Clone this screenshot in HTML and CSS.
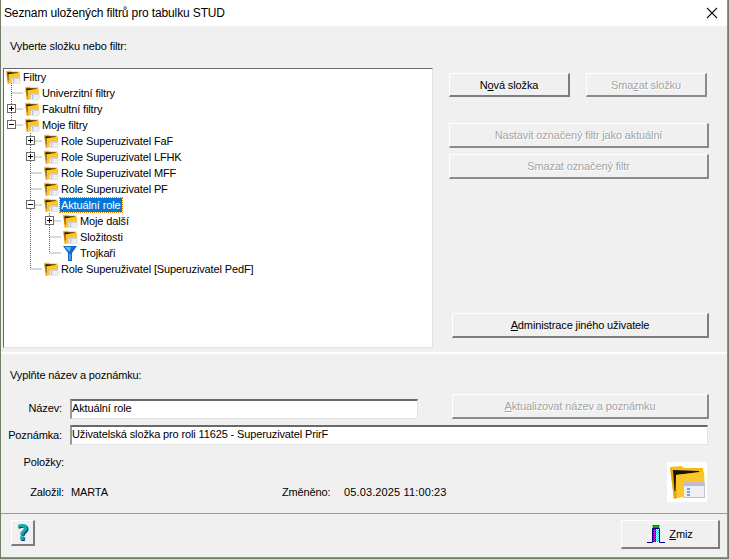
FILE: index.html
```html
<!DOCTYPE html>
<html lang="cs">
<head>
<meta charset="utf-8">
<title>Seznam uložených filtrů</title>
<link rel="stylesheet" href="styles.css">
</head>
<body>
<svg class="defs" width="0" height="0" aria-hidden="true">
  <defs>
    <symbol id="folder" viewBox="0 0 40 40">
      <path d="M3 5 L14 4 L17 6 L36 6 L38 30 L10 36 L7 37 Z" fill="#f6bb1c"/>
      <path d="M3 5 L7 37 L10 36 L6 8 Z" fill="#e8a412"/>
      <path d="M6 8 L32 9 L32 10 L9 13 L8.5 29 L7.5 29 Z" fill="#17130a"/>
      <path d="M9 13 L37 10 L38 30 L10 36 Z" fill="#fcc62a"/>
      <rect x="16.5" y="20.5" width="21" height="15" fill="#eeeef6" stroke="#c2c2d2"/>
      <rect x="17" y="21" width="20" height="3" fill="#bcbcd0"/>
      <rect x="20" y="26" width="3" height="2" fill="#7aa0d8"/>
      <rect x="20" y="29" width="3" height="2" fill="#7aa0d8"/>
      <rect x="20" y="32" width="3" height="2" fill="#7aa0d8"/>
    </symbol>
    <pattern id="dither-m" width="2" height="2" patternUnits="userSpaceOnUse">
      <rect width="2" height="2" fill="#e000d0"/><rect width="1" height="1" fill="#20006a"/>
    </pattern>
    <pattern id="dither-c" width="2" height="2" patternUnits="userSpaceOnUse">
      <rect width="2" height="2" fill="#fff"/><rect width="1" height="1" fill="#20d0e8"/><rect x="1" y="1" width="1" height="1" fill="#20d0e8"/>
    </pattern>
  </defs>
</svg>
<div class="window">
  <header class="titlebar">
    <span class="title">Seznam uložených filtrů pro tabulku STUD</span>
    <svg class="close" width="12" height="12" viewBox="0 0 12 12"><path d="M1 1 L11 11 M11 1 L1 11" stroke="#111" stroke-width="1.1" fill="none"/></svg>
  </header>

  <main class="upper">
    <p class="caption pick">Vyberte složku nebo filtr:</p>
    <div class="upper-body">
      <div class="tree">
        <svg class="guides" width="428" height="278" viewBox="0 0 428 278" aria-hidden="true">
          <path d="M8.5 14V56 M8.5 24H20 M8.5 40H20 M8.5 56H20
                   M27.5 64V200 M27.5 72H39 M27.5 88H39 M27.5 104H39 M27.5 120H39 M27.5 136H39 M27.5 200H39
                   M46.5 144V184 M46.5 152H58 M46.5 168H58 M46.5 184H58" stroke="#666" stroke-width="1" stroke-dasharray="1 1" fill="none"/>
        </svg>
        <div class="row l0"><svg class="ico"><use href="#folder"/></svg><span class="lbl">Filtry</span></div>
        <div class="row l1"><i class="exp"></i><svg class="ico"><use href="#folder"/></svg><span class="lbl">Univerzitní filtry</span></div>
        <div class="row l1"><i class="exp plus"></i><svg class="ico"><use href="#folder"/></svg><span class="lbl">Fakultní filtry</span></div>
        <div class="row l1"><i class="exp minus"></i><svg class="ico"><use href="#folder"/></svg><span class="lbl">Moje filtry</span></div>
        <div class="row l2"><i class="exp plus"></i><svg class="ico"><use href="#folder"/></svg><span class="lbl">Role Superuzivatel FaF</span></div>
        <div class="row l2"><i class="exp plus"></i><svg class="ico"><use href="#folder"/></svg><span class="lbl">Role Superuzivatel LFHK</span></div>
        <div class="row l2"><i class="exp"></i><svg class="ico"><use href="#folder"/></svg><span class="lbl">Role Superuzivatel MFF</span></div>
        <div class="row l2"><i class="exp"></i><svg class="ico"><use href="#folder"/></svg><span class="lbl">Role Superuzivatel PF</span></div>
        <div class="row l2"><i class="exp minus"></i><svg class="ico"><use href="#folder"/></svg><span class="lbl sel">Aktuální role</span></div>
        <div class="row l3"><i class="exp plus"></i><svg class="ico"><use href="#folder"/></svg><span class="lbl">Moje další</span></div>
        <div class="row l3"><i class="exp"></i><svg class="ico"><use href="#folder"/></svg><span class="lbl">Složitosti</span></div>
        <div class="row l3"><i class="exp"></i>
          <svg class="ico" viewBox="0 0 16 16"><path d="M1 1H15L10 8V16H6V8Z" fill="#1668c8"/><path d="M3 2H9L7.5 7Z" fill="#5cc0f0"/><rect x="7" y="9" width="2" height="6" fill="#3fa0e8"/></svg>
          <span class="lbl">Trojkaři</span></div>
        <div class="row l2"><i class="exp"></i><svg class="ico"><use href="#folder"/></svg><span class="lbl">Role Superuživatel [Superuzivatel PedF]</span></div>
      </div>
      <div class="actions">
        <div class="pair">
          <button class="btn wide-a"><span>N<u>o</u>vá složka</span></button>
          <button class="btn wide-b off"><span>Sma<u>z</u>at složku</span></button>
        </div>
        <button class="btn full off set">Nastavit označený filtr jako aktuální</button>
        <button class="btn full off del">Smazat označený filtr</button>
        <button class="btn admin"><span><u>A</u>dministrace jiného uživatele</span></button>
      </div>
    </div>
  </main>

  <section class="lower">
    <p class="caption fill">Vyplňte název a poznámku:</p>
    <div class="line name-line">
      <span class="key name-key">Název:</span>
      <div class="input short">Aktuální role</div>
      <button class="btn update off"><span><u>A</u>ktualizovat název a poznámku</span></button>
    </div>
    <div class="line note-line">
      <span class="key">Poznámka:</span>
      <div class="input long">Uživatelská složka pro roli 11625 - Superuzivatel PrirF</div>
    </div>
    <div class="line items-line"><span class="key far">Položky:</span></div>
    <div class="line meta-line">
      <span class="key far">Založil:</span>
      <span class="author">MARTA</span>
      <span class="changed">Změněno:</span>
      <span class="stamp">05.03.2025 11:00:23</span>
      <div class="bigicon"><svg width="40" height="40"><use href="#folder"/></svg></div>
    </div>
  </section>

  <footer class="footer">
    <button class="btn help"><span class="q">?</span></button>
    <button class="btn exit">
      <svg width="18" height="18" viewBox="0 0 18 18" aria-hidden="true">
        <rect x="5" y="4" width="4" height="13" fill="url(#dither-m)"/>
        <rect x="9" y="4" width="4" height="13" fill="url(#dither-c)"/>
        <path d="M0 17.5H5.5V3.5H12.5V17.5H18" fill="none" stroke="#00008c" stroke-width="1"/>
        <rect x="6" y="0.5" width="6" height="2" fill="#00c000" stroke="#003000" stroke-width="0.6"/>
      </svg>
      <span><u>Z</u>miz</span>
    </button>
  </footer>
</div>
</body>
</html>
```
FILE: styles.css
```css
html, body { margin: 0; padding: 0; }
body {
  width: 729px;
  height: 559px;
  overflow: hidden;
  background: #6f7f6a;
  font-family: "Liberation Sans", "Noto Sans", sans-serif;
  font-size: 11px;
  letter-spacing: -0.13px;
  color: #000;
}
.defs { position: absolute; }
p { margin: 0; }
.window {
  margin-left: 1px;
  width: 726px;
  height: 557px;
  background: #f0f0f0;
  display: flex;
  flex-direction: column;
  border-right: 1px solid #8f8f8f;
  border-bottom: 1px solid #8f8f8f;
}
.titlebar {
  height: 26px;
  flex: none;
  background: #fff;
  display: flex;
  align-items: center;
  justify-content: space-between;
  padding: 0 9px 0 3px;
}
.title { font-size: 12px; }
.upper { flex: none; height: 328px; border-bottom: 2px solid #fff; box-sizing: border-box; }
.pick { padding: 14px 0 0 9px; height: 27px; box-sizing: border-box; }
.upper-body { display: flex; }
.tree {
  position: relative;
  margin: 15px 0 0 2px;
  width: 428px;
  height: 278px;
  background: #fff;
  border-top: 1px solid #696969;
  border-left: 1px solid #696969;
  border-right: 1px solid #e3e3e3;
  border-bottom: 1px solid #e3e3e3;
}
.guides { position: absolute; left: -1px; top: 0; }
.row { position: relative; display: flex; align-items: center; height: 16px; }
.l0 { padding-left: 1px; }
.l1 { padding-left: 1px; }
.l2 { padding-left: 20px; }
.l3 { padding-left: 39px; }
.exp { flex: none; width: 19px; height: 16px; position: relative; }
.plus::before, .minus::before {
  content: "";
  position: absolute;
  left: 2px; top: 3px;
  width: 9px; height: 9px;
  box-sizing: border-box;
  border: 1px solid #6a6a6a;
  background:
    linear-gradient(#000, #000) center / 5px 1px no-repeat,
    #fff;
}
.plus::before {
  background:
    linear-gradient(#000, #000) center / 5px 1px no-repeat,
    linear-gradient(#000, #000) center / 1px 5px no-repeat,
    #fff;
}
.ico { flex: none; width: 16px; height: 16px; margin-right: 1px; }
.lbl { white-space: nowrap; line-height: 14px; padding: 0 1px; }
.sel {
  background: #0078d7;
  color: #fff;
  outline: 1px dotted #e08000;
  padding-right: 2px;
}
.actions { position: relative; margin-left: 16px; width: 260px; display: flex; flex-direction: column; padding-top: 20px; }
.pair { display: flex; gap: 16px; }
.btn {
  font: inherit;
  font-size: 11px;
  letter-spacing: inherit;
  color: #000;
  background: #f0f0f0;
  padding: 0;
  box-sizing: border-box;
  border: 0;
  border-top: 1px solid #fff;
  border-left: 1px solid #fff;
  border-right: 2px solid #7d7d7d;
  border-bottom: 2px solid #7d7d7d;
  display: flex;
  align-items: center;
  justify-content: center;
  height: 24px;
}
.off { color: #a4a4a4; text-shadow: 1px 1px 0 #fff; border-right-color: #8a8a8a; border-bottom-color: #8a8a8a; }
.wide-a { width: 121px; }
.wide-b { width: 121px; }
.full { width: 260px; }
.set { margin-top: 26px; height: 25px; }
.del { margin-top: 6px; height: 25px; }
.admin { margin-top: 134px; margin-left: 3px; width: 257px; height: 25px; }
.lower { flex: none; position: relative; height: 160px; box-sizing: border-box; border-bottom: 1px solid #9a9a9a; }
.fill { padding: 15px 0 0 9px; height: 40px; box-sizing: border-box; }
.line { display: flex; align-items: center; }
.key { width: 61px; text-align: right; flex: none; }
.name-key { margin-top: 2px; }
.far { width: 63px; }
.input {
  margin-left: 8px;
  height: 20px;
  background: #fff;
  box-sizing: border-box;
  border-top: 2px solid #696969;
  border-left: 2px solid #9a9a9a;
  border-right: 1px solid #e3e3e3;
  border-bottom: 1px solid #e3e3e3;
  line-height: 15px;
}
.short { width: 348px; margin-top: 4px; }
.long { width: 638px; }
.update { margin-left: 34px; width: 257px; height: 25px; }
.name-line { height: 25px; }
.note-line { height: 20px; margin-top: 6px; }
.items-line { margin-top: 10px; height: 14px; }
.meta-line { position: relative; margin-top: 16px; height: 14px; }
.author { margin-left: 7px; width: 211px; }
.changed { width: 62px; }
.stamp { flex: none; letter-spacing: 0.13px; }
.bigicon { position: absolute; left: 666px; top: -23px; width: 40px; height: 40px; background: #fff; }
.footer { flex: 1; display: flex; justify-content: space-between; align-items: flex-start; padding: 6px 7px 0 10px; }
.help { width: 24px; height: 26px; }
.q {
  font-family: "DejaVu Sans", sans-serif;
  font-weight: 700;
  font-size: 21px;
  line-height: 22px;
  color: #12a8b8;
  text-shadow: 1px 1px 0 #063a58;
}
.exit { width: 99px; height: 29px; gap: 4px; }
```
